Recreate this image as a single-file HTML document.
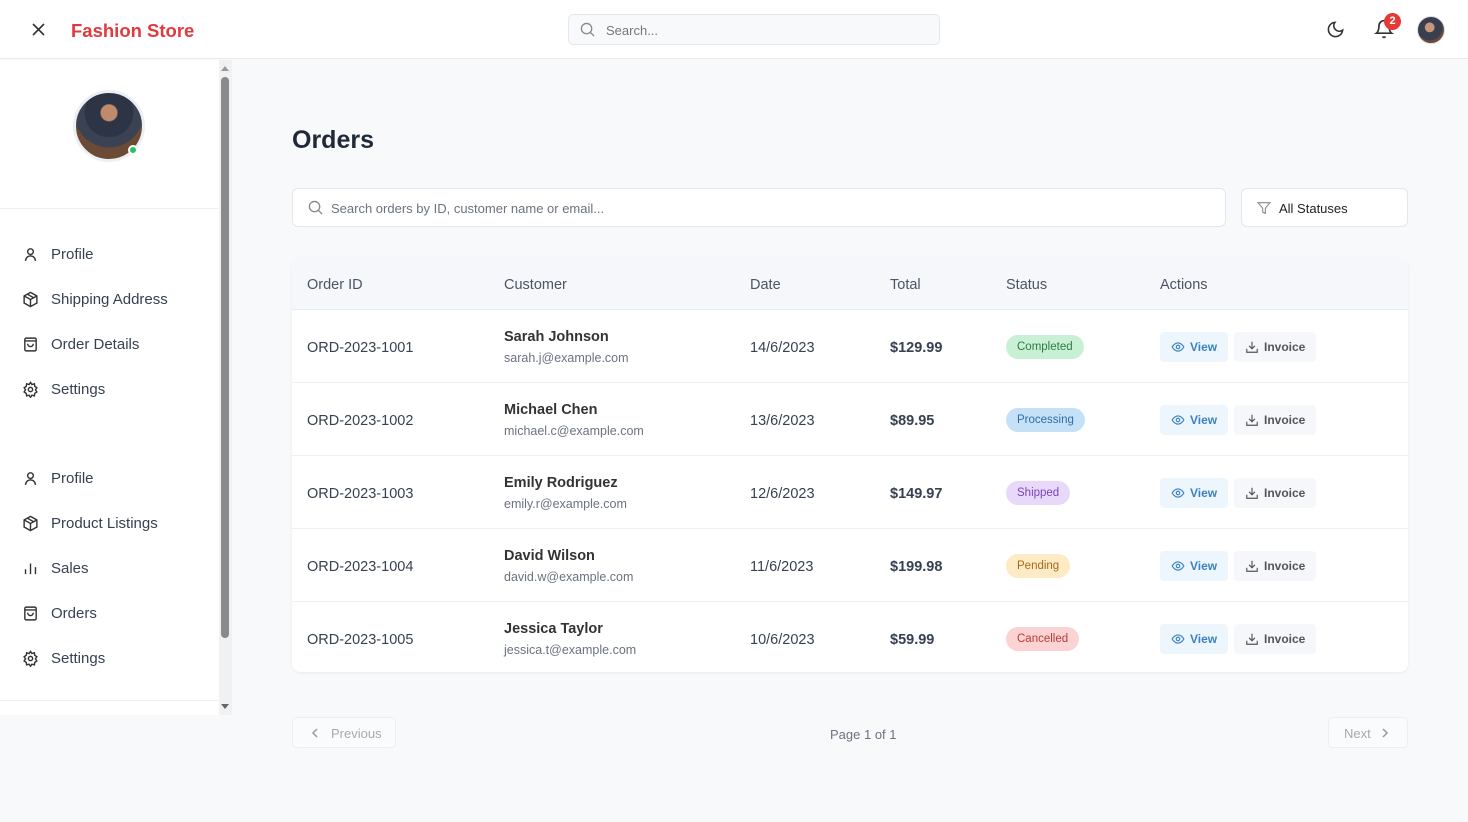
<!DOCTYPE html>
<html><head><meta charset="utf-8">
<style>
*{box-sizing:border-box;margin:0;padding:0}
body{width:1468px;height:822px;overflow:hidden;background:#f8f9fb;font-family:"Liberation Sans",sans-serif;color:#374151;position:relative}
.top{position:absolute;left:0;top:0;width:1468px;height:59px;background:#fff;border-bottom:1px solid #e8eaee}
.side{position:absolute;left:0;top:60px;width:232px;height:655px;background:#fff;border-right:1px solid #eceef1}
.sb{position:absolute;left:219px;top:60px;width:13px;height:655px;background:#f1f1f1}
.thumb{position:absolute;left:221px;top:77px;width:8px;height:561px;background:#8a8a8a;border-radius:4px}
.nav{position:absolute;left:22px;font-size:15px;color:#374151;display:flex;align-items:center;gap:12px}
.nav svg{width:17px;height:17px}
.abs{position:absolute}
.table{position:absolute;left:292px;top:258px;width:1116px;height:414px;background:#fff;border-radius:8px;box-shadow:0 1px 3px rgba(0,0,0,.06);overflow:hidden}
.th{height:52px;background:#f5f7fa;border-bottom:1px solid #e8edf3;position:relative}
.th span{position:absolute;top:19px;font-size:14.5px;color:#4b5563}
.row{height:73px;border-bottom:1px solid #edf1f5;position:relative;font-size:14.5px;color:#374151}
.row>*{position:absolute}
.badge{top:25px;height:24px;padding:0 11px;border-radius:12px;font-size:11.5px;line-height:25px}
.btn{top:22px;height:30px;border-radius:4px;font-size:12px;font-weight:bold;display:flex;align-items:center;gap:5px;padding:0 11px}
.nm{font-weight:bold;color:#333}
</style></head><body>
<div class="top">
<svg class="abs" style="left:31px;top:22px" width="15" height="15" viewBox="0 0 15 15"><path d="M2 2L13 13M13 2L2 13" stroke="#333" stroke-width="1.6"/></svg>
<div class="abs" style="left:71px;top:20px;font-size:18.5px;font-weight:bold;color:#e0393e">Fashion Store</div>
<div class="abs" style="left:568px;top:14px;width:372px;height:31px;background:#f8f9fb;border:1px solid #e3e6ea;border-radius:5px"></div>
<svg class="abs" style="left:580px;top:22px" width="15" height="15" viewBox="0 0 16 16"><circle cx="7" cy="7" r="5.5" fill="none" stroke="#888" stroke-width="1.4"/><path d="M11 11L15 15" stroke="#888" stroke-width="1.4"/></svg>
<div class="abs" style="left:606px;top:23px;font-size:13px;color:#777">Search...</div>
<svg class="abs" style="left:1326px;top:20px" width="19" height="19" viewBox="0 0 24 24"><path d="M21 12.8A9 9 0 1 1 11.2 3a7 7 0 0 0 9.8 9.8z" fill="none" stroke="#333" stroke-width="2"/></svg>
<svg class="abs" style="left:1374px;top:19px" width="20" height="20" viewBox="0 0 24 24"><path d="M6 8a6 6 0 0 1 12 0c0 7 3 9 3 9H3s3-2 3-9M10.3 21a1.9 1.9 0 0 0 3.4 0" fill="none" stroke="#333" stroke-width="2"/></svg>
<div class="abs" style="left:1384px;top:13px;width:17px;height:17px;border-radius:50%;background:#e53935;color:#fff;font-size:11px;font-weight:bold;text-align:center;line-height:17px">2</div>
<div class="abs" style="left:1417px;top:16px;width:28px;height:28px;border-radius:50%;background:radial-gradient(circle at 45% 40%,#c9967a 0 22%,#3a3f4f 24% 60%,#6a4a3a 62%);border:1px solid #ddd"></div>
</div>
<div class="side">
<div class="abs" style="left:73px;top:30px;width:72px;height:72px;border-radius:50%;border:3px solid #eceff3;background:radial-gradient(circle at 50% 30%,#c08a6c 0 14%,#2d3445 16% 42%,#3b4253 44% 60%,#6b4a36 62%)"></div>
<div class="abs" style="left:128px;top:85px;width:10px;height:10px;border-radius:50%;background:#22c55e;border:2px solid #fff"></div>
<div class="abs" style="left:0;top:148px;width:218px;height:1px;background:#eceef1"></div>
<div class="abs" style="left:0;top:640px;width:218px;height:1px;background:#eceef1"></div>
</div>
<div class="sb"></div><div class="thumb"></div>
<svg class="abs" style="left:221px;top:65px" width="8" height="6"><path d="M0 6L4 1L8 6z" fill="#999"/></svg>
<svg class="abs" style="left:221px;top:704px" width="8" height="6"><path d="M0 0L4 5L8 0z" fill="#666"/></svg>

<div class="nav" style="top:246px"><svg viewBox="0 0 24 24" fill="none" stroke="#333" stroke-width="2"><circle cx="12" cy="8" r="4"/><path d="M5 21a7 7 0 0 1 14 0"/></svg>Profile</div>
<div class="nav" style="top:291px"><svg viewBox="0 0 24 24" fill="none" stroke="#333" stroke-width="2"><path d="M12 2l9 5v10l-9 5-9-5V7zM3 7l9 5 9-5M12 12v10M7.5 4.5l9 5"/></svg>Shipping Address</div>
<div class="nav" style="top:336px"><svg viewBox="0 0 24 24" fill="none" stroke="#333" stroke-width="2"><rect x="4" y="3" width="16" height="18" rx="2"/><path d="M4 7h16M8 11a4 4 0 0 0 8 0"/></svg>Order Details</div>
<div class="nav" style="top:381px"><svg viewBox="0 0 24 24" fill="none" stroke="#333" stroke-width="2"><circle cx="12" cy="12" r="3"/><path d="M12 2l2 3 3.5-1 .5 3.5 3 2-2 3 2 3-3 2-.5 3.5-3.5-1-2 3-2-3-3.5 1-.5-3.5-3-2 2-3-2-3 3-2 .5-3.5 3.5 1z"/></svg>Settings</div>
<div class="nav" style="top:470px"><svg viewBox="0 0 24 24" fill="none" stroke="#333" stroke-width="2"><circle cx="12" cy="8" r="4"/><path d="M5 21a7 7 0 0 1 14 0"/></svg>Profile</div>
<div class="nav" style="top:515px"><svg viewBox="0 0 24 24" fill="none" stroke="#333" stroke-width="2"><path d="M12 2l9 5v10l-9 5-9-5V7zM3 7l9 5 9-5M12 12v10M7.5 4.5l9 5"/></svg>Product Listings</div>
<div class="nav" style="top:560px"><svg viewBox="0 0 24 24" fill="none" stroke="#333" stroke-width="2"><path d="M5 20v-7M12 20V5M19 20v-10"/></svg>Sales</div>
<div class="nav" style="top:605px"><svg viewBox="0 0 24 24" fill="none" stroke="#333" stroke-width="2"><rect x="4" y="3" width="16" height="18" rx="2"/><path d="M4 7h16M8 11a4 4 0 0 0 8 0"/></svg>Orders</div>
<div class="nav" style="top:650px"><svg viewBox="0 0 24 24" fill="none" stroke="#333" stroke-width="2"><circle cx="12" cy="12" r="3"/><path d="M12 2l2 3 3.5-1 .5 3.5 3 2-2 3 2 3-3 2-.5 3.5-3.5-1-2 3-2-3-3.5 1-.5-3.5-3-2 2-3-2-3 3-2 .5-3.5 3.5 1z"/></svg>Settings</div>

<div class="abs" style="left:292px;top:126px;font-size:25px;font-weight:bold;color:#1f2937">Orders</div>
<div class="abs" style="left:292px;top:188px;width:934px;height:39px;background:#fff;border:1px solid #e3e6ea;border-radius:6px"></div>
<svg class="abs" style="left:308px;top:200px" width="15" height="15" viewBox="0 0 16 16"><circle cx="7" cy="7" r="5.5" fill="none" stroke="#888" stroke-width="1.4"/><path d="M11 11L15 15" stroke="#888" stroke-width="1.4"/></svg>
<div class="abs" style="left:331px;top:201px;font-size:13px;color:#6b7280">Search orders by ID, customer name or email...</div>
<div class="abs" style="left:1241px;top:188px;width:167px;height:39px;background:#fff;border:1px solid #e3e6ea;border-radius:6px"></div>
<svg class="abs" style="left:1256px;top:200px" width="16" height="16" viewBox="0 0 24 24"><path d="M3 4h18l-7 8.5V20l-4-2v-5.5z" fill="none" stroke="#888" stroke-width="1.6"/></svg>
<div class="abs" style="left:1279px;top:201px;font-size:13px;color:#222">All Statuses</div>

<div class="table">
<div class="th"><span style="left:15px">Order ID</span><span style="left:212px">Customer</span><span style="left:458px">Date</span><span style="left:598px">Total</span><span style="left:714px">Status</span><span style="left:868px">Actions</span></div>
<div class="row"><span style="left:15px;top:30px">ORD-2023-1001</span><span class="nm" style="left:212px;top:19px">Sarah Johnson</span><span style="left:212px;top:41px;font-size:12.5px;color:#6b7280">sarah.j@example.com</span><span style="left:458px;top:30px">14/6/2023</span><span style="left:598px;top:30px;font-weight:bold">$129.99</span><span class="badge" style="left:714px;background:#c8f0d4;color:#2f7a45">Completed</span>
<span class="btn" style="left:868px;background:#eef6fd;color:#3b82c4"><svg width="14" height="14" viewBox="0 0 24 24" fill="none" stroke="#3b82c4" stroke-width="2"><path d="M2 12s4-7 10-7 10 7 10 7-4 7-10 7S2 12 2 12z"/><circle cx="12" cy="12" r="3"/></svg>View</span><span class="btn" style="left:942px;background:#f5f7fa;color:#555"><svg width="14" height="14" viewBox="0 0 24 24" fill="none" stroke="#555" stroke-width="2"><path d="M12 3v12M7 10l5 5 5-5M3 15v6h18v-6"/></svg>Invoice</span></div>
<div class="row"><span style="left:15px;top:30px">ORD-2023-1002</span><span class="nm" style="left:212px;top:19px">Michael Chen</span><span style="left:212px;top:41px;font-size:12.5px;color:#6b7280">michael.c@example.com</span><span style="left:458px;top:30px">13/6/2023</span><span style="left:598px;top:30px;font-weight:bold">$89.95</span><span class="badge" style="left:714px;background:#c5e1f8;color:#2f6ca5">Processing</span>
<span class="btn" style="left:868px;background:#eef6fd;color:#3b82c4"><svg width="14" height="14" viewBox="0 0 24 24" fill="none" stroke="#3b82c4" stroke-width="2"><path d="M2 12s4-7 10-7 10 7 10 7-4 7-10 7S2 12 2 12z"/><circle cx="12" cy="12" r="3"/></svg>View</span><span class="btn" style="left:942px;background:#f5f7fa;color:#555"><svg width="14" height="14" viewBox="0 0 24 24" fill="none" stroke="#555" stroke-width="2"><path d="M12 3v12M7 10l5 5 5-5M3 15v6h18v-6"/></svg>Invoice</span></div>
<div class="row"><span style="left:15px;top:30px">ORD-2023-1003</span><span class="nm" style="left:212px;top:19px">Emily Rodriguez</span><span style="left:212px;top:41px;font-size:12.5px;color:#6b7280">emily.r@example.com</span><span style="left:458px;top:30px">12/6/2023</span><span style="left:598px;top:30px;font-weight:bold">$149.97</span><span class="badge" style="left:714px;background:#e8d9fa;color:#7a45b8">Shipped</span>
<span class="btn" style="left:868px;background:#eef6fd;color:#3b82c4"><svg width="14" height="14" viewBox="0 0 24 24" fill="none" stroke="#3b82c4" stroke-width="2"><path d="M2 12s4-7 10-7 10 7 10 7-4 7-10 7S2 12 2 12z"/><circle cx="12" cy="12" r="3"/></svg>View</span><span class="btn" style="left:942px;background:#f5f7fa;color:#555"><svg width="14" height="14" viewBox="0 0 24 24" fill="none" stroke="#555" stroke-width="2"><path d="M12 3v12M7 10l5 5 5-5M3 15v6h18v-6"/></svg>Invoice</span></div>
<div class="row"><span style="left:15px;top:30px">ORD-2023-1004</span><span class="nm" style="left:212px;top:19px">David Wilson</span><span style="left:212px;top:41px;font-size:12.5px;color:#6b7280">david.w@example.com</span><span style="left:458px;top:30px">11/6/2023</span><span style="left:598px;top:30px;font-weight:bold">$199.98</span><span class="badge" style="left:714px;background:#fcebc4;color:#a8691a">Pending</span>
<span class="btn" style="left:868px;background:#eef6fd;color:#3b82c4"><svg width="14" height="14" viewBox="0 0 24 24" fill="none" stroke="#3b82c4" stroke-width="2"><path d="M2 12s4-7 10-7 10 7 10 7-4 7-10 7S2 12 2 12z"/><circle cx="12" cy="12" r="3"/></svg>View</span><span class="btn" style="left:942px;background:#f5f7fa;color:#555"><svg width="14" height="14" viewBox="0 0 24 24" fill="none" stroke="#555" stroke-width="2"><path d="M12 3v12M7 10l5 5 5-5M3 15v6h18v-6"/></svg>Invoice</span></div>
<div class="row" style="border-bottom:none"><span style="left:15px;top:30px">ORD-2023-1005</span><span class="nm" style="left:212px;top:19px">Jessica Taylor</span><span style="left:212px;top:41px;font-size:12.5px;color:#6b7280">jessica.t@example.com</span><span style="left:458px;top:30px">10/6/2023</span><span style="left:598px;top:30px;font-weight:bold">$59.99</span><span class="badge" style="left:714px;background:#fbd3d3;color:#b93a3a">Cancelled</span>
<span class="btn" style="left:868px;background:#eef6fd;color:#3b82c4"><svg width="14" height="14" viewBox="0 0 24 24" fill="none" stroke="#3b82c4" stroke-width="2"><path d="M2 12s4-7 10-7 10 7 10 7-4 7-10 7S2 12 2 12z"/><circle cx="12" cy="12" r="3"/></svg>View</span><span class="btn" style="left:942px;background:#f5f7fa;color:#555"><svg width="14" height="14" viewBox="0 0 24 24" fill="none" stroke="#555" stroke-width="2"><path d="M12 3v12M7 10l5 5 5-5M3 15v6h18v-6"/></svg>Invoice</span></div>
</div>

<div class="abs" style="left:292px;top:717px;width:104px;height:31px;border:1px solid #eceef1;border-radius:5px;background:#fafbfc;font-size:13px;color:#aaa;padding:8px 0 0 38px">Previous</div>
<svg class="abs" style="left:311px;top:728px" width="8" height="10"><path d="M6 1L2 5l4 4" fill="none" stroke="#999" stroke-width="1.5"/></svg>
<div class="abs" style="left:830px;top:727px;font-size:13px;color:#6b7280">Page 1 of 1</div>
<div class="abs" style="left:1328px;top:717px;width:80px;height:31px;border:1px solid #eceef1;border-radius:5px;background:#fafbfc;font-size:13px;color:#aaa;padding:8px 0 0 15px">Next</div>
<svg class="abs" style="left:1381px;top:728px" width="8" height="10"><path d="M2 1l4 4-4 4" fill="none" stroke="#999" stroke-width="1.5"/></svg>
</body></html>
